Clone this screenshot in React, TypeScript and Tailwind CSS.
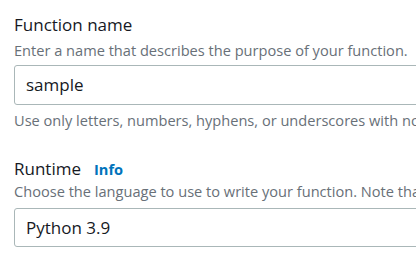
import React from 'react';

const App: React.FC = () => {
  return (
    <div
      className="w-[416px] h-[262px] overflow-hidden bg-white pl-[14px] pt-[13px]"
      style={{ fontFamily: '"Open Sans", "Noto Sans", sans-serif' }}
    >
      <div className="w-[640px]">
        <div className="text-[17px] leading-[24px] text-[#16191f]">Function name</div>
        <div className="text-[14.6px] leading-[20px] text-[#687078] mt-[3px] whitespace-nowrap">
          Enter a name that describes the purpose of your function.
        </div>
        <div className="mt-[5px] h-[40px] border border-[#aab7b8] rounded-[3px] flex items-center px-[11px] text-[17px] text-[#16191f]">
          sample
        </div>
        <div className="text-[14.6px] leading-[20px] text-[#687078] mt-[5px] whitespace-nowrap">
          Use only letters, numbers, hyphens, or underscores with no spaces.
        </div>

        <div className="mt-[27px] flex items-baseline gap-[13px]">
          <span className="text-[17px] leading-[24px] text-[#16191f]">Runtime</span>
          <span className="text-[14.6px] font-bold text-[#0073bb]">Info</span>
        </div>
        <div className="text-[14.6px] leading-[20px] text-[#687078] whitespace-nowrap">
          Choose the language to use to write your function. Note that the console code editor supports only Node.js, Python, and Ruby.
        </div>
        <div className="mt-[7px] h-[39px] border border-[#aab7b8] rounded-[3px] flex items-center px-[11px] text-[17px] text-[#16191f]">
          Python 3.9
        </div>
      </div>
    </div>
  );
};

export default App;
